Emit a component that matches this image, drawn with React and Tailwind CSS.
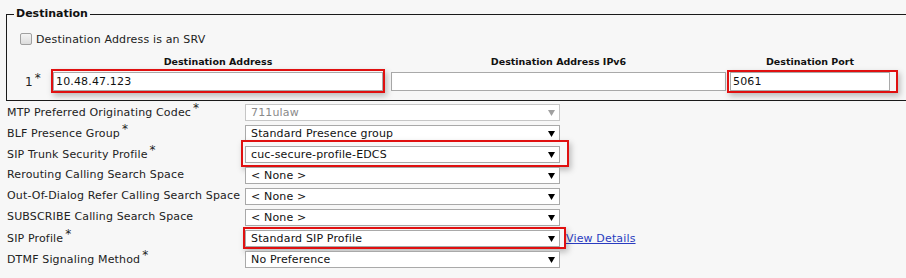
import React from "react";

const ROWS = [
  { label: "MTP Preferred Originating Codec", req: true, value: "711ulaw", disabled: true },
  { label: "BLF Presence Group", req: true, value: "Standard Presence group" },
  { label: "SIP Trunk Security Profile", req: true, value: "cuc-secure-profile-EDCS", mark: "trunk" },
  { label: "Rerouting Calling Search Space", value: "< None >" },
  { label: "Out-Of-Dialog Refer Calling Search Space", value: "< None >" },
  { label: "SUBSCRIBE Calling Search Space", value: "< None >" },
  { label: "SIP Profile", req: true, value: "Standard SIP Profile", mark: "sip", link: "View Details" },
  { label: "DTMF Signaling Method", req: true, value: "No Preference" },
];

const Arrow = ({ disabled }) => (
  <svg width="7" height="7" viewBox="0 0 7 7" className="shrink-0">
    <polygon points="0,1 7,1 3.5,7" fill={disabled ? "#a0a0a0" : "#000"} />
  </svg>
);

// red annotation frame drawn over the field
const Mark = ({ className }) => (
  <div className={`absolute pointer-events-none border-2 border-[#e01010] shadow-[2px_3px_6px_rgba(0,0,0,0.25)] ${className}`} />
);

const Star = () => <span className="relative -top-[4px] text-[12px] leading-none ml-[2px]">*</span>;

const Select = ({ value, disabled }) => (
  <div
    className={`flex items-center justify-between w-[315px] h-[17px] pl-[5px] pr-[4px] bg-white border ${
      disabled ? "border-[#c6c6c6] text-[#8a8a8a]" : "border-[#a9a9a9] text-[#111]"
    }`}
  >
    <span className="leading-none whitespace-pre">{value}</span>
    <Arrow disabled={disabled} />
  </div>
);

const TextInput = ({ value, width }) => (
  <div className={`${width} h-[19px] flex items-center pl-[2px] bg-white border border-[#a9a9a9] text-[#111] leading-none`}>
    {value}
  </div>
);

export default function App() {
  return (
    <div
      className="w-[906px] h-[278px] overflow-hidden bg-[#f7f7f7] text-[#222] text-[11px] tracking-[0.15px] pt-[7px]"
      style={{ fontFamily: '"DejaVu Sans", Verdana, sans-serif' }}
    >
      {/* Destination */}
      <fieldset className="ml-[6px] w-[920px] border border-[#1a1a1a] pb-[9px]">
        <legend className="ml-[7px] px-[2px] font-bold text-[11px] tracking-normal leading-[14px] text-[#111]">
          Destination
        </legend>

        <div className="mt-[11px] h-[14px] flex items-center pl-[13px]">
          <div className="w-[12px] h-[12px] rounded-[2px] border border-[#a0a0a0] bg-gradient-to-b from-[#f4f4f4] to-[#dcdcdc]" />
          <span className="ml-[4px] leading-none">Destination Address is an SRV</span>
        </div>

        <div className="mt-[9px] h-[14px] flex items-center font-bold text-[9.5px] tracking-normal text-[#111]">
          <div className="w-[46px]" />
          <div className="w-[330px] text-center">Destination Address</div>
          <div className="w-[8px]" />
          <div className="w-[335px] text-center">Destination Address IPv6</div>
          <div className="w-[4px]" />
          <div className="w-[160px] text-center">Destination Port</div>
        </div>

        <div className="mt-[3px] h-[19px] flex items-center">
          <div className="w-[46px] pl-[18px] text-[12px] leading-none">
            1<Star />
          </div>
          <div className="relative">
            <TextInput value="10.48.47.123" width="w-[330px]" />
            <Mark className="-left-[2px] -right-[2px] -top-[3px] -bottom-[2px]" />
          </div>
          <div className="w-[8px]" />
          <TextInput value="" width="w-[335px]" />
          <div className="w-[4px]" />
          <div className="relative">
            <TextInput value="5061" width="w-[160px]" />
            <Mark className="-left-[3px] -right-[8px] -top-[2px] -bottom-[2px]" />
          </div>
        </div>
      </fieldset>

      <div className="mt-[1px]">
        {ROWS.map((row) => (
          <div key={row.label} className="h-[21px] flex items-center">
            <div className="w-[245px] pl-[7px] whitespace-nowrap leading-none -mt-[2px]">
              {row.label}
              {row.req && <Star />}
            </div>
            <div className="relative">
              <Select value={row.value} disabled={row.disabled} />
              {row.mark === "trunk" && <Mark className="-left-[4px] -right-[9px] -top-[6px] -bottom-[4px]" />}
              {row.mark === "sip" && <Mark className="-left-[2px] -right-[6px] -top-[3px] -bottom-[2px]" />}
            </div>
            {row.link && (
              <a className="ml-[6px] text-[#2a3cc0] underline leading-none" href="#">
                {row.link}
              </a>
            )}
          </div>
        ))}
      </div>
    </div>
  );
}
